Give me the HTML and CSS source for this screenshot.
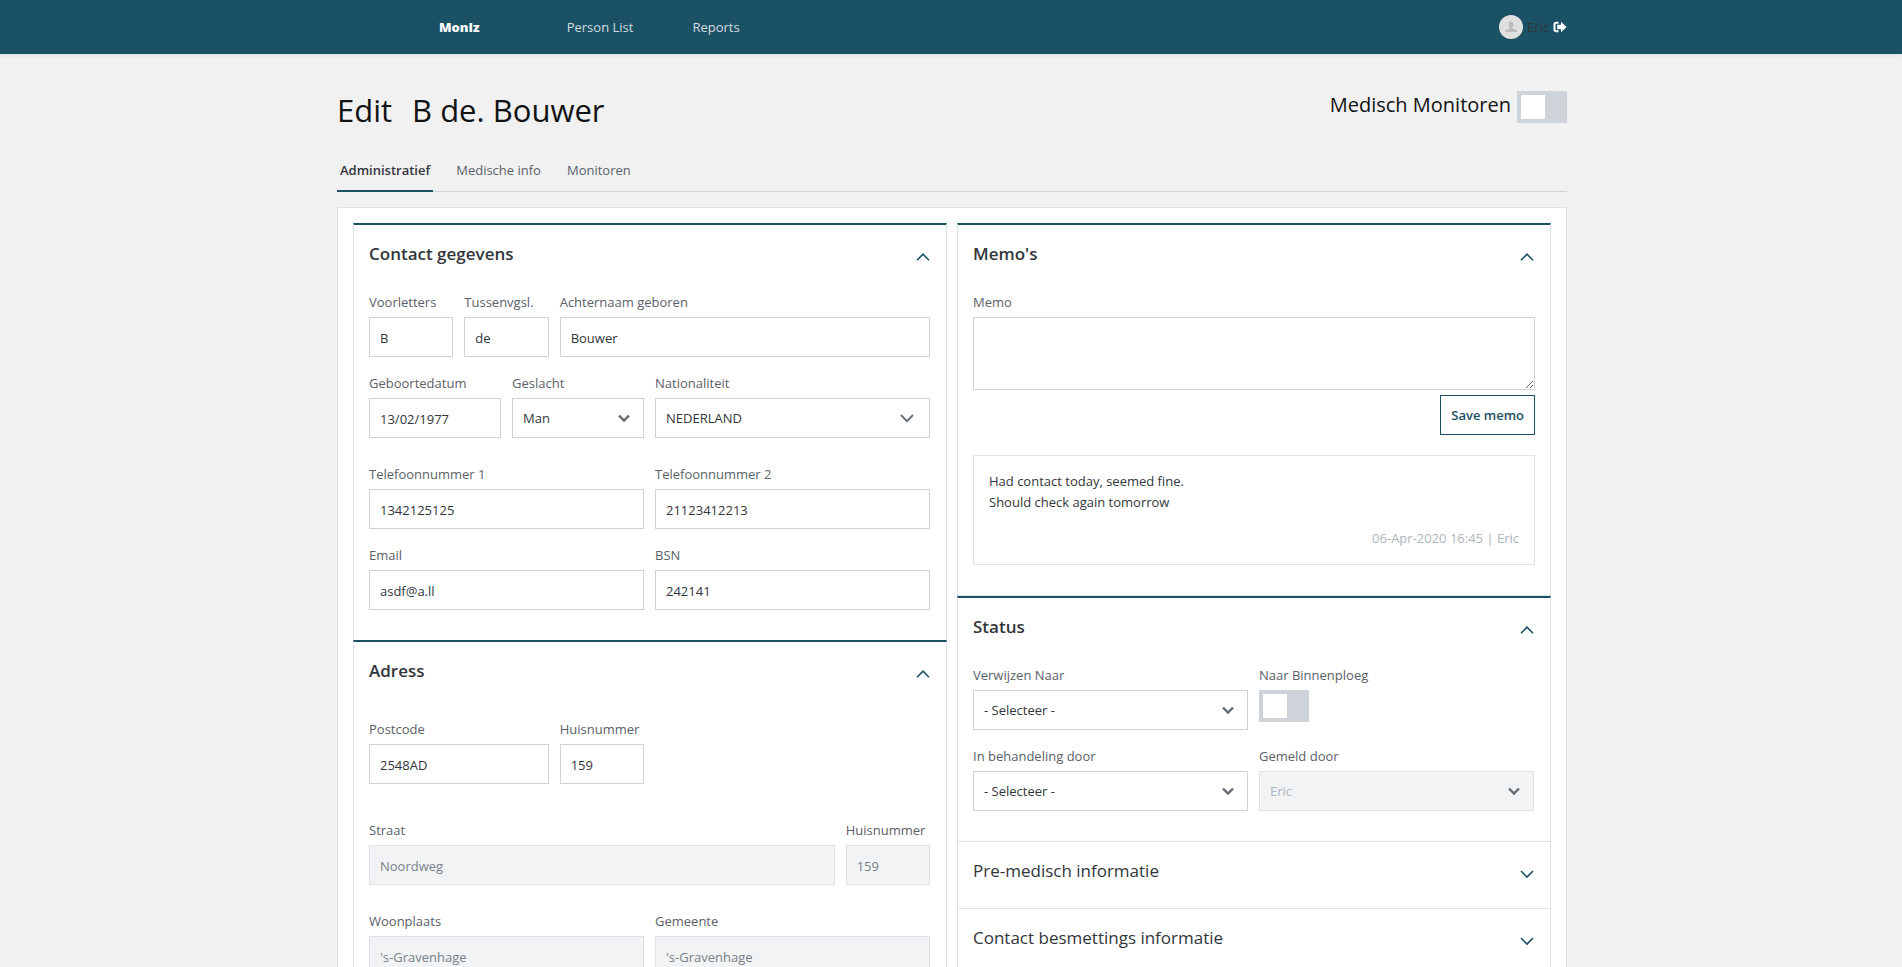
FILE: index.html
```html
<!doctype html>
<html lang="nl">
  <head>
    <meta charset="UTF-8" />
    <meta name="viewport" content="width=device-width, initial-scale=1" />
    <title>MonIz - Edit B de. Bouwer</title>
    <link rel="stylesheet" href="styles.css">
  </head>

  <body>
    <svg class="sprite" aria-hidden="true">
      <symbol id="chevron-up" viewBox="0 0 14 10">
        <path d="M1 8.300 7 2.200l6 6.100" />
      </symbol>
      <symbol id="chevron-down" viewBox="0 0 14 10">
        <path d="M1 2 7 8.100 13 2" />
      </symbol>
      <symbol id="chevron-small" viewBox="0 0 14 10">
        <path d="M2 2.500 7 7.500l5-5" />
      </symbol>
    </svg>

    <header class="navbar">
      <div class="container navbar-inner">
        <nav class="nav">
          <a class="brand" href="#">MonIz</a>
          <a href="#">Person List</a>
          <a href="#">Reports</a>
        </nav>
        <div class="user">
          <svg class="avatar" viewBox="0 0 24 24" aria-hidden="true">
            <circle cx="12" cy="12" r="12" fill="#e0e0e0" />
            <path
              fill="#bdbdbd"
              d="M12 6.500c-1.700 0-2.500 1.100-2.500 2.700 0 1.300.5 2.400 1.200 3v1.300c-2.500.7-4.700 1.500-4.700 2.700V17h12v-.8c0-1.200-2.200-2-4.700-2.700v-1.300c.7-.6 1.200-1.700 1.200-3 0-1.600-.8-2.700-2.500-2.700z"
            />
          </svg>
          <span>Eric</span>
          <a class="logout" href="#" aria-label="Logout">
            <svg viewBox="0 0 14 12" width="14" height="12">
              <path d="M5.500 1.800H3.200Q1.500 1.800 1.500 3.500v5Q1.500 10.200 3.200 10.200H5.500" fill="none" stroke="#fff" stroke-width="2" />
              <path d="M8 .8 13.500 6 8 11.200V8.300H4.200V3.700H8z" fill="#fff" />
            </svg>
          </a>
        </div>
      </div>
    </header>

    <main class="container">
      <div class="page-head">
        <h1><span>Edit</span> <span>B de. Bouwer</span></h1>
        <label class="monitor-switch">
          Medisch Monitoren
          <input type="checkbox" class="switch" />
        </label>
      </div>

      <nav class="tabs">
        <a class="active" href="#">Administratief</a>
        <a href="#">Medische info</a>
        <a href="#">Monitoren</a>
      </nav>

      <div class="panel">
        <div class="column">
          <section class="card">
            <button class="card-head">
              Contact gegevens
              <svg class="chevron"><use href="#chevron-up" /></svg>
            </button>
            <div class="card-body">
              <div class="row">
                <div class="field span-2">
                  <label for="initials">Voorletters</label>
                  <input id="initials" type="text" value="B" />
                </div>
                <div class="field span-2">
                  <label for="prefix">Tussenvgsl.</label>
                  <input id="prefix" type="text" value="de" />
                </div>
                <div class="field span-8">
                  <label for="lastname">Achternaam geboren</label>
                  <input id="lastname" type="text" value="Bouwer" />
                </div>
              </div>
              <div class="row">
                <div class="field span-3">
                  <label for="birthdate">Geboortedatum</label>
                  <input id="birthdate" type="text" value="13/02/1977" />
                </div>
                <div class="field span-3">
                  <label for="gender">Geslacht</label>
                  <div class="select">
                    <select id="gender">
                      <option>Man</option>
                      <option>Vrouw</option>
                    </select>
                    <svg class="chevron"><use href="#chevron-small" /></svg>
                  </div>
                </div>
                <div class="field span-6">
                  <label for="nationality">Nationaliteit</label>
                  <div class="select select-search">
                    <select id="nationality">
                      <option>NEDERLAND</option>
                    </select>
                    <svg class="chevron"><use href="#chevron-down" /></svg>
                  </div>
                </div>
              </div>
              <div class="row row-apart">
                <div class="field span-6">
                  <label for="phone1">Telefoonnummer 1</label>
                  <input id="phone1" type="tel" value="1342125125" />
                </div>
                <div class="field span-6">
                  <label for="phone2">Telefoonnummer 2</label>
                  <input id="phone2" type="tel" value="21123412213" />
                </div>
              </div>
              <div class="row">
                <div class="field span-6">
                  <label for="email">Email</label>
                  <input id="email" type="email" value="asdf@a.ll" />
                </div>
                <div class="field span-6">
                  <label for="bsn">BSN</label>
                  <input id="bsn" type="text" value="242141" />
                </div>
              </div>
            </div>
          </section>

          <section class="card">
            <button class="card-head">
              Adress
              <svg class="chevron"><use href="#chevron-up" /></svg>
            </button>
            <div class="card-body">
              <div class="row row-apart">
                <div class="field span-4">
                  <label for="zip">Postcode</label>
                  <input id="zip" type="text" value="2548AD" />
                </div>
                <div class="field span-2">
                  <label for="number">Huisnummer</label>
                  <input id="number" type="text" value="159" />
                </div>
              </div>
              <div class="row row-far">
                <div class="field span-10">
                  <label for="street">Straat</label>
                  <input id="street" type="text" value="Noordweg" disabled />
                </div>
                <div class="field span-2">
                  <label for="street-number">Huisnummer</label>
                  <input id="street-number" type="text" value="159" disabled />
                </div>
              </div>
              <div class="row row-apart">
                <div class="field span-6">
                  <label for="city">Woonplaats</label>
                  <input id="city" type="text" value="'s-Gravenhage" disabled />
                </div>
                <div class="field span-6">
                  <label for="municipality">Gemeente</label>
                  <input id="municipality" type="text" value="'s-Gravenhage" disabled />
                </div>
              </div>
            </div>
          </section>
        </div>

        <div class="column">
          <section class="card card-ruled">
            <button class="card-head">
              Memo's
              <svg class="chevron"><use href="#chevron-up" /></svg>
            </button>
            <div class="card-body">
              <div class="memo-form">
                <label for="memo">Memo</label>
                <textarea id="memo"></textarea>
                <button class="save">Save memo</button>
              </div>
              <article class="memo">
                <p>Had contact today, seemed fine.<br />Should check again tomorrow</p>
                <footer>06-Apr-2020 16:45 | Eric</footer>
              </article>
            </div>
          </section>

          <section class="card">
            <button class="card-head">
              Status
              <svg class="chevron"><use href="#chevron-up" /></svg>
            </button>
            <div class="card-body">
              <div class="row">
                <div class="field span-6">
                  <label for="refer">Verwijzen Naar</label>
                  <div class="select">
                    <select id="refer">
                      <option>- Selecteer -</option>
                    </select>
                    <svg class="chevron"><use href="#chevron-small" /></svg>
                  </div>
                </div>
                <div class="field span-6">
                  <label for="inner-team">Naar Binnenploeg</label>
                  <input id="inner-team" type="checkbox" class="switch" />
                </div>
              </div>
              <div class="row">
                <div class="field span-6">
                  <label for="treated-by">In behandeling door</label>
                  <div class="select">
                    <select id="treated-by">
                      <option>- Selecteer -</option>
                    </select>
                    <svg class="chevron"><use href="#chevron-small" /></svg>
                  </div>
                </div>
                <div class="field span-6">
                  <label for="reported-by">Gemeld door</label>
                  <div class="select">
                    <select id="reported-by" disabled>
                      <option>Eric</option>
                    </select>
                    <svg class="chevron"><use href="#chevron-small" /></svg>
                  </div>
                </div>
              </div>
            </div>
          </section>

          <section class="card collapsed">
            <button class="card-head">
              Pre-medisch informatie
              <svg class="chevron"><use href="#chevron-down" /></svg>
            </button>
          </section>
          <section class="card collapsed">
            <button class="card-head">
              Contact besmettings informatie
              <svg class="chevron"><use href="#chevron-down" /></svg>
            </button>
          </section>
        </div>
      </div>
    </main>
  </body>
</html>
```

FILE: styles.css
```css
* {
  box-sizing: border-box;
}

body {
  margin: 0;
  background: #f1f1f1;
  color: #32363b;
  font-family: "Segoe UI", "Open Sans", "Noto Sans", sans-serif;
  font-size: 13px;
  line-height: 21px;
}

a {
  color: inherit;
  text-decoration: none;
}

input,
select,
textarea,
button {
  font: inherit;
  color: inherit;
}

.sprite {
  display: none;
}

.container {
  max-width: 1232px;
  margin: 0 auto;
  padding-left: 2px;
}

/* Top bar */
.navbar {
  background: #1b5164;
  box-shadow: 0 1px 4px rgba(0, 0, 0, 0.1);
}

.navbar-inner {
  display: flex;
  align-items: center;
  justify-content: space-between;
  height: 54px;
}

.nav {
  display: flex;
  gap: 59px;
  padding-left: 102px;
  color: #d3dde1;
}

.brand {
  margin-right: 28px;
  color: white;
  font-weight: 800;
}

.user {
  display: flex;
  align-items: center;
  gap: 4px;
}

.avatar {
  width: 24px;
  height: 24px;
}

.logout svg {
  display: block;
}

/* Page title and tabs */
.page-head {
  display: flex;
  justify-content: space-between;
  align-items: flex-start;
  padding-top: 32px;
  color: #111315;
}

h1 {
  display: flex;
  gap: 20px;
  margin: 0;
  font-size: 31px;
  font-weight: 500;
  line-height: 48px;
}

.monitor-switch {
  display: flex;
  gap: 6px;
  padding-top: 5px;
  font-size: 20px;
  font-weight: 500;
  line-height: 28px;
}

.switch {
  appearance: none;
  display: block;
  width: 50px;
  height: 32px;
  margin: 0;
  padding: 4px;
  background: #ced3da;
}

.switch::before {
  content: "";
  display: block;
  width: 24px;
  height: 24px;
  background: white;
}

.switch:checked::before {
  margin-left: auto;
}

.tabs {
  display: flex;
  gap: 20px;
  margin-top: 24px;
  border-bottom: 1px solid #ced3da;
  color: #5a6169;
}

.tabs a {
  margin-bottom: -1px;
  padding: 2px 3px 9px;
  border-bottom: 2px solid transparent;
}

.tabs .active {
  border-color: #1b5164;
  color: #32363b;
  font-weight: 600;
}

/* Cards */
.panel {
  display: grid;
  grid-template-columns: 1fr 1fr;
  gap: 10px;
  margin-top: 15px;
  padding: 15px;
  background: white;
  border: 1px solid #dee2e6;
}

.card {
  border: 1px solid #dee2e6;
  border-top: 2px solid #1b5164;
  border-bottom: 0;
}

.card-ruled {
  border-bottom: 1px solid #dee2e6;
}

.collapsed {
  border-top: 1px solid #dee2e6;
}

.card-head {
  display: flex;
  justify-content: space-between;
  width: 100%;
  padding: 15px 15px 25px;
  border: 0;
  background: none;
  font-size: 17px;
  font-weight: 600;
  line-height: 27px;
  text-align: left;
}

.collapsed .card-head {
  padding-bottom: 24px;
  font-weight: 400;
}

.chevron {
  width: 14px;
  height: 10px;
  fill: none;
  stroke: #1b5164;
  stroke-width: 1.6;
}

.card-head .chevron {
  margin: 12px 1px 0 0;
}

.card-body {
  padding: 0 15px 15px;
}

.row {
  display: grid;
  grid-template-columns: repeat(12, 1fr);
  column-gap: 11px;
  margin: 0 1px 15px 0;
}

.row-apart {
  padding-top: 10px;
}

.row-far {
  padding-top: 20px;
}

.span-2 {
  grid-column: span 2;
}

.span-3 {
  grid-column: span 3;
}

.span-4 {
  grid-column: span 4;
}

.span-6 {
  grid-column: span 6;
}

.span-8 {
  grid-column: span 8;
}

.span-10 {
  grid-column: span 10;
}

/* Form controls */
.field label,
.memo-form label {
  display: block;
  margin-bottom: 4px;
  color: #5a6169;
  white-space: nowrap;
}

.row + .row .field label {
  padding-top: 1px;
}

.field input:not(.switch),
.field select {
  display: block;
  width: 100%;
  height: 40px;
  padding: 1px 10px 0;
  border: 1px solid #ced3da;
  border-radius: 0;
  background: white;
}

.field input:disabled,
.field select:disabled {
  border-color: #dee2e6;
  background: #f1f3f5;
  color: #7a8188;
  opacity: 1;
}

.field select:disabled {
  color: #adb5bd;
}

.select {
  display: grid;
  align-items: center;
}

.select > * {
  grid-area: 1 / 1;
}

.field select {
  appearance: none;
}

.select .chevron {
  justify-self: end;
  margin-right: 13px;
  stroke: #646b73;
  stroke-width: 2.4;
  pointer-events: none;
}

.select-search .chevron {
  margin-right: 16px;
  stroke-width: 1.8;
}

/* Memo's */
.memo-form {
  display: flex;
  flex-direction: column;
}

.memo-form textarea {
  height: 73px;
  padding: 10px;
  border: 1px solid #ced3da;
  resize: vertical;
}

.save {
  align-self: flex-end;
  height: 40px;
  margin-top: 5px;
  padding: 0 10px;
  border: 1px solid #1b5164;
  background: white;
  color: #1b5164;
  font-weight: 600;
}

.memo {
  margin: 20px 0 15px;
  padding: 15px;
  border: 1px solid #dee2e6;
}

.memo p {
  margin: 0 0 15px;
}

.memo footer {
  color: #adb5bd;
  text-align: right;
}
```
